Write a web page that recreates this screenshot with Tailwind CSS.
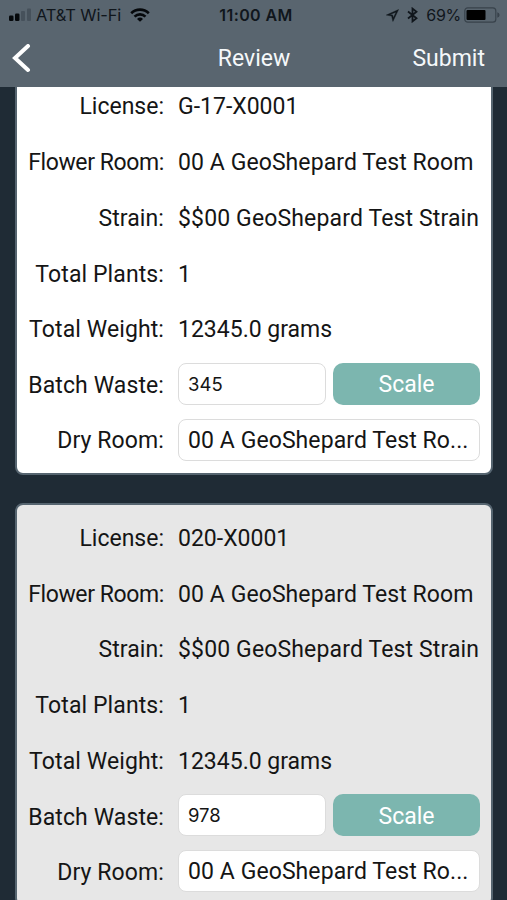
<!DOCTYPE html>
<html lang="en">

<head>
    <meta charset="UTF-8">
    <meta name="viewport" content="width=device-width, initial-scale=1.0">
    <title>Review</title>

    <script src="https://cdn.jsdelivr.net/npm/@tailwindcss/browser@4"></script>
</head>

<body class="h-screen flex flex-col overflow-hidden bg-[#1f2b35] text-[#151515] font-['Roboto',sans-serif] text-[23px]">
    <header class="h-[87px] shrink-0 bg-[#59656f]">
        <!-- status bar -->
        <div class="h-[30px] grid grid-cols-3 items-center pl-2 pr-[8px] text-[#10161c] font-['Inter',sans-serif] text-[16.5px] leading-none">
            <div class="flex items-center whitespace-nowrap">
                <svg class="w-[24px] h-[14px] shrink-0" viewBox="0 0 24 14">
                    <rect x="1" y="7.5" width="4.5" height="5.5" rx="1.3" fill="#05080b" />
                    <rect x="7" y="5.5" width="4.5" height="7.5" rx="1.3" fill="#05080b" />
                    <rect x="13" y="3" width="4" height="10" rx="1" fill="#46515b" />
                    <rect x="19" y="0.5" width="4" height="12.5" rx="1" fill="#46515b" />
                </svg>
                <span class="ml-[4px] tracking-[-0.15px]">AT&amp;T Wi-Fi</span>
                <svg class="w-[20px] h-[14px] ml-[9px] shrink-0" viewBox="0 0 20 14" fill="none" stroke="#05080b" stroke-width="2.6">
                    <path d="M1.2 5.2A12.6 12.6 0 0 1 18.8 5.2" />
                    <path d="M4.5 8.6A7.9 7.9 0 0 1 15.5 8.6" />
                    <path d="M10 13.7L7 10.9A4.3 4.3 0 0 1 13 10.9Z" fill="#05080b" stroke="none" />
                </svg>
            </div>
            <div class="text-center font-semibold text-[16px] tracking-[0.4px] pl-[5px]">11:00 AM</div>
            <div class="flex items-center justify-end">
                <svg class="w-[13px] h-[13px]" viewBox="0 0 13 13">
                    <path d="M12.6 0.5L0.3 6.1L5.6 7L6.9 12.4ZM10 3.2L7.3 8.8L6.7 5.9L3.9 5.5Z" fill="#10161c" stroke="#10161c" stroke-width="0.4" fill-rule="evenodd" />
                </svg>
                <svg class="w-[11px] h-[16px] ml-[8px]" viewBox="0 0 11 16" fill="none" stroke="#10161c" stroke-width="1.8">
                    <path d="M1 4.5L9.5 11.3L5.5 14.4V1.6L9.5 4.7L1 11.5" />
                </svg>
                <span class="ml-[8px] text-[16px] tracking-[-0.3px]">69%</span>
                <svg class="w-[36px] h-[16px] ml-[3px] -mr-px" viewBox="0 0 36 16">
                    <rect x="0.8" y="0.8" width="31" height="14.4" rx="3" fill="none" stroke="#38424b" stroke-width="1.2" />
                    <rect x="2.5" y="3" width="19" height="10" rx="1" fill="#000" />
                    <path d="M33.3 5.3Q35.6 6 35.6 8T33.3 10.7Z" fill="#38424b" />
                </svg>
            </div>
        </div>

        <!-- nav bar -->
        <div class="h-[56px] grid grid-cols-3 items-center pl-[12px] pr-[22px] pt-px text-[#f5f8fa]">
            <svg class="w-[19px] h-[30px]" viewBox="0 0 19 30" fill="none" stroke="#fff" stroke-width="4">
                <path d="M16 2L3 14L16 26" stroke-linecap="round" />
            </svg>
            <h1 class="text-center pl-[11px] pt-px">Review</h1>
            <a class="text-right pt-px">Submit</a>
        </div>
    </header>

    <main class="flex-1 min-h-0 overflow-hidden pl-[15px] pr-[14px]">
        <section class="-mt-[16px] border-2 border-[#566570] rounded-lg bg-white pt-[4px] pb-[5px]">
            <dl class="grid grid-cols-[147px_302px] gap-x-[14px] auto-rows-[55.8px] items-center whitespace-nowrap">
                <dt class="text-right pt-[5px]">License:</dt>
                <dd class="pt-[5px]">G-17-X0001</dd>
                <dt class="text-right pt-[5px] tracking-[-0.4px]">Flower Room:</dt>
                <dd class="pt-[5px] tracking-[0.08px]">00 A GeoShepard Test Room</dd>
                <dt class="text-right pt-[5px] tracking-[0.1px]">Strain:</dt>
                <dd class="pt-[5px] tracking-[0.14px]">$$00 GeoShepard Test Strain</dd>
                <dt class="text-right pt-[5px] tracking-[0.1px]">Total Plants:</dt>
                <dd class="pt-[5px]">1</dd>
                <dt class="text-right pt-[5px] tracking-[0.1px]">Total Weight:</dt>
                <dd class="pt-[5px]">12345.0 grams</dd>
                <dt class="text-right pt-[5px] tracking-[0.1px]">Batch Waste:</dt>
                <dd class="flex gap-[7px]">
                    <input class="w-[148px] h-[42px] px-[9px] border border-[#dcdcdc] rounded-lg bg-white font-['Inter',sans-serif] text-[18.5px]" value="345">
                    <button class="flex-1 h-[42px] pt-[3px] rounded-[10px] bg-[#7cb6af] text-white">Scale</button>
                </dd>
                <dt class="text-right pt-[4px] tracking-[0.1px]">Dry Room:</dt>
                <dd class="h-[42px] px-[9px] border border-[#dcdcdc] rounded-lg bg-white leading-[42px] tracking-[0.08px]">00 A GeoShepard Test Ro...</dd>
            </dl>
        </section>

        <section class="mt-[28px] border-2 border-[#566570] rounded-lg bg-[#e7e7e7] pt-[4px] pb-[5px]">
            <dl class="grid grid-cols-[147px_302px] gap-x-[14px] auto-rows-[55.8px] items-center whitespace-nowrap">
                <dt class="text-right pt-[5px]">License:</dt>
                <dd class="pt-[5px]">020-X0001</dd>
                <dt class="text-right pt-[5px] tracking-[-0.4px]">Flower Room:</dt>
                <dd class="pt-[5px] tracking-[0.08px]">00 A GeoShepard Test Room</dd>
                <dt class="text-right pt-[5px] tracking-[0.1px]">Strain:</dt>
                <dd class="pt-[5px] tracking-[0.14px]">$$00 GeoShepard Test Strain</dd>
                <dt class="text-right pt-[5px] tracking-[0.1px]">Total Plants:</dt>
                <dd class="pt-[5px]">1</dd>
                <dt class="text-right pt-[5px] tracking-[0.1px]">Total Weight:</dt>
                <dd class="pt-[5px]">12345.0 grams</dd>
                <dt class="text-right pt-[5px] tracking-[0.1px]">Batch Waste:</dt>
                <dd class="flex gap-[7px]">
                    <input class="w-[148px] h-[42px] px-[9px] border border-[#dcdcdc] rounded-lg bg-white font-['Inter',sans-serif] text-[18.5px]" value="978">
                    <button class="flex-1 h-[42px] pt-[3px] rounded-[10px] bg-[#7cb6af] text-white">Scale</button>
                </dd>
                <dt class="text-right pt-[4px] tracking-[0.1px]">Dry Room:</dt>
                <dd class="h-[42px] px-[9px] border border-[#dcdcdc] rounded-lg bg-white leading-[42px] tracking-[0.08px]">00 A GeoShepard Test Ro...</dd>
            </dl>
        </section>
    </main>
</body>

</html>
